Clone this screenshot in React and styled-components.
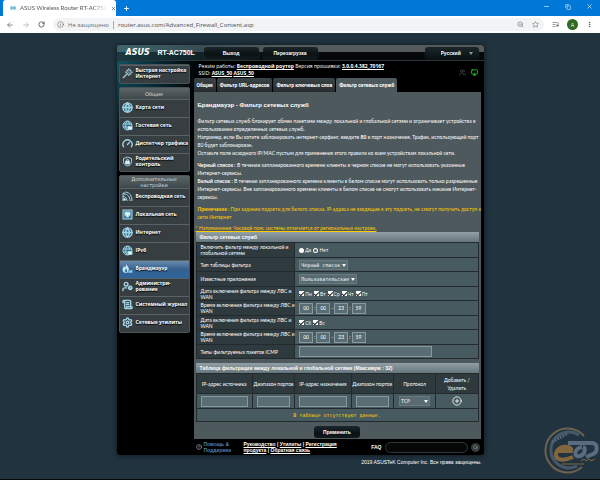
// core
import { useState } from 'react'
// style
import styled, { createGlobalStyle } from 'styled-components'
// icon
import {
  ArrowLeft, ArrowRight, RotateCw, Info, X, Plus, Minus, Copy, ZoomOut, Star, ListMusic,
  EllipsisVertical, Globe, Gauge, Shield, Rss, Network, Flame, Settings, ScrollText, Wand,
  UserCog, Users, Monitor, CirclePlus, Search, CircleHelp, Radio, Earth,
} from 'lucide-react'

const GlobalStyle = createGlobalStyle`
  *{ box-sizing: border-box; }
  body{
    margin: 0;
    background: #21333e;
    color: #fff;
    font: 5px/8px Lato, "Liberation Sans", Arial, sans-serif;
  }
  button, input, select{ font: inherit; color: inherit; margin: 0; }
  ul, p, h1, h2{ margin: 0; padding: 0; list-style: none; }
  a{ color: inherit; }
  svg{ display: block; flex-shrink: 0; }
`

const Page = styled.div`
  position: relative;
  display: flex;
  flex-direction: column;
  min-height: 100vh;
  border-bottom: 1px solid #05080a;
`

/* browser */
const TabStrip = styled.div`
  display: flex;
  align-items: flex-end;
  height: 16px;
  padding-left: 3px;
  background: #0078d7;
`
const BrowserTab = styled.div`
  display: flex;
  align-items: center;
  gap: 4px;
  width: 113px;
  height: 16px;
  padding: 0 5px 0 7px;
  border-radius: 3px 3px 0 0;
  background: #fff;
  color: #55595d;
  font: 6px/8px Lato, sans-serif;
  white-space: nowrap;
  span{
    flex: 1;
    mask-image: linear-gradient(90deg, #000 85%, transparent);
  }
`
const PlainButton = styled.button`
  display: flex;
  align-items: center;
  justify-content: center;
  padding: 0;
  border: 0;
  background: none;
  cursor: pointer;
`
const NewTab = styled(PlainButton)`
  width: 20px;
  height: 16px;
`
const AddButton = styled(PlainButton)`
  width: 100%;
`
const WindowButtons = styled.div`
  display: flex;
  gap: 15px;
  height: 13px;
  margin-left: auto;
  padding-right: 7px;
  align-self: flex-start;
`
const Toolbar = styled.div`
  display: flex;
  align-items: center;
  gap: 8px;
  height: 17px;
  padding: 0 7px 0 6px;
  background: #fff;
  color: #55595d;
`
const Address = styled.label`
  display: flex;
  flex: 1;
  align-items: center;
  gap: 4px;
  height: 13px;
  padding: 0 5px 0 4px;
  border-radius: 7px;
  background: #f1f3f4;
  color: #6b6f73;
  font: 6px/10px "Open Sans", sans-serif;
  white-space: nowrap;
  input{
    flex: 1;
    min-width: 0;
    height: 8px;
    padding: 0 0 0 4px;
    border: 0;
    border-left: 1px solid #a9adb0;
    background: none;
    color: #4a4e52;
    outline: none;
  }
`
const Avatar = styled(PlainButton)`
  width: 11px;
  height: 11px;
  border-radius: 50%;
  background: #2f6b22;
  color: #fff;
`

/* router */
const Router = styled.div`
  display: flex;
  flex-direction: column;
  width: calc(100% - 24px);
  max-width: 367px;
  margin: 12px auto 0;
  border-radius: 3px;
  background: radial-gradient(ellipse 84px 90px at 0 20px, #0f5260, #062530 55%, transparent), #000;
  box-shadow: 0 0 5px #0b141a;
`
const Header = styled.header`
  display: flex;
  align-items: center;
  gap: 4px;
  height: 16px;
  padding: 0 5px 0 9px;
  border-radius: 3px 3px 0 0;
  border-bottom: 1px solid #2c3539;
  background:
    linear-gradient(90deg, #2c6d7980, #19404a80 22%, transparent 45%),
    linear-gradient(#555a5c 0 7px, #050708 7px);
`
const Logo = styled.span`
  width: 28px;
  font: italic bold 8px/10px "DejaVu Sans", sans-serif;
`
const Model = styled.h1`
  width: 42px;
  font: bold 7px/10px "Liberation Sans", Arial, sans-serif;
  white-space: nowrap;
`
const DarkButton = styled.button`
  width: ${({ $width }) => $width}px;
  height: 12px;
  padding: 0;
  border: 0;
  border-radius: 3px;
  background: linear-gradient(#1c272b, #0a1114 60%, #101a1d);
  box-shadow: 0 0 1px #59666b;
  font: bold 5px/8px "Liberation Sans", Arial, sans-serif;
  cursor: pointer;
`
const Language = styled.div`
  position: relative;
  display: flex;
  align-items: center;
  margin-left: auto;
  select{
    width: 54px;
    height: 12px;
    padding: 0 16px;
    border: 0;
    border-radius: 3px;
    appearance: none;
    background: linear-gradient(#1c272b, #0a1114);
    box-shadow: 0 0 1px #59666b;
    font: bold 5px/8px "Liberation Sans", Arial, sans-serif;
  }
`
const Arrow = styled.span`
  position: absolute;
  right: ${({ $right = 2 }) => $right}px;
  top: 50%;
  margin-top: -1px;
  border: 2px solid transparent;
  border-top: 3px solid ${({ $color = '#fff' }) => $color};
  border-bottom: 0;
  pointer-events: none;
`
const Body = styled.div`
  display: flex;
  gap: 4px;
  padding: 1px 3px 0 2px;
`

/* menu */
const Side = styled.nav`
  display: flex;
  flex-direction: column;
  flex-shrink: 0;
  gap: 3px;
  width: 71px;
  padding-top: 2px;
  font: bold 5px/6px "Open Sans", sans-serif;
`
const MenuGroup = styled.section`
  border: 1px solid #4a5357;
  border-radius: 2px;
  background: #363e41;
  h2{
    display: flex;
    align-items: center;
    justify-content: center;
    min-height: 11px;
    background: linear-gradient(#5b6467, #3e474a);
    color: #d8dddf;
    font: 5px/6px "DejaVu Sans", sans-serif;
    text-align: center;
    white-space: pre-line;
  }
`
const MenuItem = styled.a`
  display: flex;
  align-items: center;
  gap: 3px;
  height: 18px;
  padding: 0 0 3px 2px;
  border-top: 1px solid #596266;
  background: ${({ $on }) => $on ? 'linear-gradient(#6a89ad, #34618f 50%, #2f659d)' : 'none'};
  text-decoration: none;
  white-space: pre;
  text-shadow: 0 1px 1px #000;
  svg{ color: #a4d3e6; }
`

/* content */
const Main = styled.main`
  flex: 1;
  min-width: 0;
`
const Status = styled.div`
  display: flex;
  align-items: center;
  justify-content: space-between;
  height: 16px;
  padding: 0 3px 0 5px;
  font: 5px/7px "Open Sans", sans-serif;
  white-space: nowrap;
  a{ font-weight: bold; }
  div{
    display: flex;
    gap: 5px;
    padding-top: 5px;
  }
`
const Tabs = styled.div`
  display: flex;
  gap: 1px;
`
const Tab = styled.button`
  height: 14px;
  padding: 0 3px;
  border: 0;
  border-radius: 2px 2px 0 0;
  background: ${({ $on }) => $on ? '#4d595d' : 'linear-gradient(#3a4347, #252d30)'};
  font: bold 5px/8px Roboto, sans-serif;
  white-space: nowrap;
  cursor: pointer;
`
const Panel = styled.div`
  display: flex;
  flex-direction: column;
  padding: 8px 2px 1px;
  background: #4d595d;
`
const Title = styled.h2`
  padding: 0 2px;
  font: bold 6px/10px "Liberation Sans", Arial, sans-serif;
`
const Text = styled.p`
  margin-top: ${({ $gap = 4 }) => $gap}px;
  padding-left: 2px;
  color: ${({ $warn }) => $warn ? '#fc0' : '#fff'};
  white-space: nowrap;
`
const Remark = styled.a`
  align-self: flex-start;
  margin-top: 3px;
  color: #fc0;
  white-space: nowrap;
`
const Table = styled.table`
  width: 100%;
  margin-top: ${({ $gap = 0 }) => $gap}px;
  border: 1px solid #222a2d;
  border-collapse: collapse;
  table-layout: fixed;
  line-height: 6px;
  caption{
    height: 10px;
    padding-left: 4px;
    background: linear-gradient(#92a0a5, #66757c);
    font: bold 5px/10px "Liberation Sans", Arial, sans-serif;
    text-align: left;
    white-space: nowrap;
  }
  th, td{
    padding: 0 4px;
    border: 1px solid #222a2d;
  }
  th{
    background: #2f3a3e;
    font-weight: normal;
  }
  td{ background: #475a5f; }
`
const FormTable = styled(Table)`
  tr{ height: 14px; }
  tr:nth-child(odd){ height: 15px; }
  th{
    width: 35%;
    text-align: left;
    white-space: pre;
  }
`
const FilterTable = styled(Table)`
  text-align: center;
  thead tr{ height: 20px; }
  tbody tr{ height: 15px; }
  tfoot tr{ height: 13px; }
  th{ padding: 0; line-height: 8px; white-space: pre; }
  tfoot td{
    color: #fc0;
    font-family: "DejaVu Sans Mono", monospace;
  }
`
const Line = styled.div`
  display: flex;
  align-items: center;
  gap: ${({ $gap = 2 }) => $gap}px;
`
const Field = styled.input`
  display: block;
  width: ${({ $width = '100%' }) => $width};
  height: 11px;
  padding: 0 3px;
  border: 1px solid #8a999e;
  background: #596d74;
  outline: none;
`
const SelectBox = styled.span`
  position: relative;
  display: inline-block;
  vertical-align: middle;
  select{
    display: block;
    width: ${({ $width }) => $width}px;
    height: 10px;
    padding: 0 1px;
    border: 1px solid #6b7b80;
    appearance: none;
    background: #576b71;
    font: 5px/8px "DejaVu Sans Mono", monospace;
  }
`
const Check = styled.label`
  display: flex;
  align-items: center;
  gap: 1px;
  font-family: "Open Sans", sans-serif;
  input{
    display: grid;
    place-content: center;
    width: 5px;
    height: 5px;
    border-radius: ${({ $round }) => $round ? '50%' : '0'};
    background: #fff;
    appearance: none;
  }
  input[type="checkbox"]:checked::before{
    content: '';
    width: 2px;
    height: 4px;
    border: solid #222;
    border-width: 0 1px 1px 0;
    transform: rotate(45deg);
  }
  input[type="radio"]:not(:checked)::before{
    content: '';
    width: 3px;
    height: 3px;
    border-radius: 50%;
    background: #5c686c;
  }
`
const Apply = styled(DarkButton)`
  align-self: center;
  margin-top: 4px;
`
const Footer = styled.footer`
  display: flex;
  align-items: center;
  height: 16px;
  margin-left: 77px;
  padding: 0 4px 0 2px;
  font: bold 5px/6px "Liberation Sans", Arial, sans-serif;
  white-space: nowrap;
`
const Support = styled.span`
  display: flex;
  align-items: center;
  gap: 2px;
  width: 48px;
  color: #4f7fb5;
`
const Faq = styled.label`
  display: flex;
  align-items: center;
  gap: 3px;
  margin-left: auto;
  line-height: 8px;
  input{
    width: 83px;
    height: 11px;
    border: 1px solid #33393b;
    border-radius: 6px;
    background: #060808;
  }
`
const SearchButton = styled(PlainButton)`
  width: 9px;
  height: 9px;
  margin-left: 3px;
  border-radius: 50%;
  background: #33393b;
`
const Copyright = styled.p`
  width: 100%;
  max-width: 367px;
  margin: 3px auto 0;
  padding: 0 2px;
  font: 5px/8px "Liberation Sans", Arial, sans-serif;
  text-align: right;
`
const Watermark = styled.svg`
  position: absolute;
  right: 0;
  bottom: 5px;
  opacity: 0.85;
`

const mainMenu = [
  { name: 'Карта сети', Icon: Globe },
  { name: 'Гостевая сеть', Icon: Earth },
  { name: 'Диспетчер трафика', Icon: Gauge },
  { name: 'Родительский\nконтроль', Icon: Shield },
]
const extraMenu = [
  { name: 'Беспроводная сеть', Icon: Rss },
  { name: 'Локальная сеть', Icon: Network },
  { name: 'Интернет', Icon: Globe },
  { name: 'IPv6', Icon: Earth },
  { name: 'Брандмауэр', Icon: Flame },
  { name: 'Администри-\nрование', Icon: UserCog },
  { name: 'Системный журнал', Icon: ScrollText },
  { name: 'Сетевые утилиты', Icon: Settings },
]
const tabs = ['Общие', 'Фильтр URL-адресов', 'Фильтр ключевых слов', 'Фильтр сетевых служб']

function Menu({ title, items, page, setPage }) {
  return (
    <MenuGroup>
      <h2>{title}</h2>
      {items.map(({ name, Icon }) => (
        <MenuItem key={name} href="#" $on={page == name} onClick={() => setPage(name)}>
          <MenuIcon Icon={Icon} />
          <span>{name}</span>
        </MenuItem>
      ))}
    </MenuGroup>
  )
}

function MenuIcon({ Icon }) {
  if (Icon == Network) return (
    <svg width="11" height="11" viewBox="0 0 22 22" fill="none" stroke="currentColor" strokeWidth="2">
      <rect x="2" y="2" width="18" height="18" fill="#3e7b94" />
      <path d="M6 6h10v7h-3v3H9v-3H6z" fill="#e7f4fa" />
    </svg>
  )
  if (Icon == Rss) return (
    <svg width="11" height="11" viewBox="0 0 22 22" fill="none" stroke="currentColor" strokeWidth="2">
      <path d="M2 20V4h5M2 11c5 0 8 3 8 9M3 6c9 0 13 6 13 14M7 2c8 1 13 7 13 18" />
      <circle cx="5" cy="17" r="2" fill="#e7f4fa" />
    </svg>
  )
  if (Icon == Earth) return (
    <svg width="11" height="11" viewBox="0 0 22 22" fill="none" stroke="currentColor" strokeWidth="2">
      <circle cx="11" cy="11" r="9" fill="#2f6b84" />
      <path d="M2 8h18M2 14h9M11 2c-5 5-5 13 0 18M11 2c3 3 4 5 4 8" />
      <path d="M12 13h8v6h-8z" fill="#e7f4fa" />
    </svg>
  )
  if (Icon == Shield) return (
    <svg width="11" height="11" viewBox="0 0 22 22" fill="none" stroke="currentColor" strokeWidth="2">
      <path d="M11 2l8 3v6c0 5-4 8-8 9-4-1-8-4-8-9V5z" />
      <path d="M7 10h8v6H7z" fill="#e7f4fa" />
      <path d="M9 10V8c0-2 4-2 4 0v2" />
    </svg>
  )
  if (Icon == Flame) return (
    <svg width="11" height="11" viewBox="0 0 22 22">
      <path d="M8 1c1 5 6 6 6 12 0 4-2 7-6 7s-7-3-7-7c0-3 2-4 3-7l2 3c2-2 2-5 2-8z" fill="#c5e6f3" />
      <path d="M8 11c3 3 3 7 0 8-3-1-3-5 0-8z" fill="#34759a" />
      <path d="M13 14h8v6h-9zM16 14v6" fill="#a4d3e6" stroke="#34759a" />
    </svg>
  )
  return <Icon size={11} strokeWidth={3} fill={Icon == Globe ? '#34728c' : 'none'} />
}

function Select({ label, width, options }) {
  return (
    <SelectBox $width={width}>
      <select aria-label={label}>
        {options.map((option) => <option key={option}>{option}</option>)}
      </select>
      <Arrow />
    </SelectBox>
  )
}

function Days({ days }) {
  return (
    <Line>
      {days.map((day) => (
        <Check key={day}><input type="checkbox" defaultChecked />{day}</Check>
      ))}
    </Line>
  )
}

function Time() {
  return (
    <Line $gap={1}>
      <Field $width="14px" defaultValue="00" aria-label="С, часы" />:
      <Field $width="14px" defaultValue="00" aria-label="С, минуты" />-
      <Field $width="14px" defaultValue="23" aria-label="До, часы" />:
      <Field $width="14px" defaultValue="59" aria-label="До, минуты" />
    </Line>
  )
}

function Browser() {
  return (
    <>
      <TabStrip>
        <BrowserTab>
          <Radio size={6} color="#2c9fc0" strokeWidth={3} />
          <span>ASUS Wireless Router RT-AC750</span>
          <X size={5} strokeWidth={3} />
        </BrowserTab>
        <NewTab aria-label="Новая вкладка"><Plus size={7} color="#fff" strokeWidth={3} /></NewTab>
        <WindowButtons>
          <PlainButton aria-label="Свернуть"><Minus size={7} color="#fff" /></PlainButton>
          <PlainButton aria-label="Развернуть"><Copy size={6} color="#fff" /></PlainButton>
          <PlainButton aria-label="Закрыть"><X size={7} color="#fff" /></PlainButton>
        </WindowButtons>
      </TabStrip>
      <Toolbar>
        <PlainButton aria-label="Назад"><ArrowLeft size={8} /></PlainButton>
        <PlainButton aria-label="Вперед"><ArrowRight size={8} color="#a8abad" /></PlainButton>
        <PlainButton aria-label="Обновить"><RotateCw size={7} strokeWidth={3} /></PlainButton>
        <Address>
          <Info size={7} />
          Не защищено
          <input defaultValue="router.asus.com/Advanced_Firewall_Content.asp" />
          <ZoomOut size={7} />
          <span />
          <Star size={7} />
        </Address>
        <ListMusic size={7} />
        <Avatar>A</Avatar>
        <EllipsisVertical size={7} strokeWidth={3} />
      </Toolbar>
    </>
  )
}

function App() {
  const [ page, setPage ] = useState('Брандмауэр')
  const [ tab, setTab ] = useState(tabs[3])

  return (
    <Page>
      <GlobalStyle />
      <Browser />
      <Router>
        <Header>
          <Logo>ASUS</Logo>
          <Model>RT-AC750L</Model>
          <DarkButton $width={55}>Выход</DarkButton>
          <DarkButton $width={55}>Перезагрузка</DarkButton>
          <Language>
            <select aria-label="Язык"><option>Русский</option></select>
            <Arrow $right={6} $color="#8b999f" />
          </Language>
        </Header>
        <Body>
          <Side>
            <MenuGroup>
              <MenuItem href="#" onClick={() => setPage('')}>
                <Wand size={11} strokeWidth={3} />
                <span>{'Быстрая настройка\nИнтернет'}</span>
              </MenuItem>
            </MenuGroup>
            <Menu title="Общие" items={mainMenu} page={page} setPage={setPage} />
            <Menu title={'Дополнительные\nнастройки'} items={extraMenu} page={page} setPage={setPage} />
          </Side>
          <Main>
            <Status>
              <p>
                Режим работы: <a href="#">Беспроводной роутер</a> Версия прошивки: <a href="#">3.0.0.4.382_70167</a><br />
                SSID: <a href="#">ASUS_50</a> <a href="#">ASUS_50</a>
              </p>
              <div>
                <Users size={7} color="#555c5f" />
                <Monitor size={7} color="#1fc52b" strokeWidth={3} />
              </div>
            </Status>
            <Tabs>
              {tabs.map((name) => (
                <Tab key={name} $on={tab == name} onClick={() => setTab(name)}>{name}</Tab>
              ))}
            </Tabs>
            <Panel>
              <Title>Брандмауэр - Фильтр сетевых служб</Title>
              <Text $gap={7}>
                Фильтр сетевых служб блокирует обмен пакетами между локальной и глобальной сетями и ограничивает устройства в<br />
                использовании определенных сетевых служб.<br />
                Например, если Вы хотите заблокировать интернет-серфинг, введите <b>80</b> в порт назначения. Трафик, использующий порт<br />
                80 будет заблокирован.<br />
                Оставьте поле исходного IP/MAC пустым для применения этого правила ко всем устройствам локальной сети.
              </Text>
              <Text>
                <b>Черный список :</b> В течении запланированного времени клиенты в черном списке не могут использовать указанные<br />
                Интернет-сервисы.<br />
                <b>Белый список :</b> В течении запланированного времени клиенты в белом списке могут использовать только разрешенные<br />
                Интернет-сервисы. Вне запланированного времени клиенты в белом списке не смогут использовать никакие Интернет-<br />
                сервисы.
              </Text>
              <Text $warn>
                <b>Примечание :</b> При задании подсети для белого списка, IP-адреса не входящие в эту подсеть, не смогут получить доступ к<br />
                сети Интернет
              </Text>
              <Remark href="#">* Напоминание: Часовой пояс системы отличается от региональных настроек.</Remark>
              <FormTable>
                <caption>Фильтр сетевых служб</caption>
                <tbody>
                  <tr>
                    <th>{'Включить фильтр между локальной и\nглобальной сетями'}</th>
                    <td>
                      <Line>
                        <Check $round><input type="radio" name="enable" defaultChecked />Да</Check>
                        <Check $round><input type="radio" name="enable" />Нет</Check>
                      </Line>
                    </td>
                  </tr>
                  <tr>
                    <th>Тип таблицы фильтра</th>
                    <td><Select label="Тип таблицы фильтра" width={49} options={['Черный список', 'Белый список']} /></td>
                  </tr>
                  <tr>
                    <th>Известные приложения</th>
                    <td><Select label="Известные приложения" width={58} options={['Пользовательские']} /></td>
                  </tr>
                  <tr>
                    <th>{'Дата включения фильтра между ЛВС и\nWAN'}</th>
                    <td><Days days={['Пн', 'Вт', 'Ср', 'Чт', 'Пт']} /></td>
                  </tr>
                  <tr>
                    <th>{'Время включения фильтра между ЛВС и\nWAN'}</th>
                    <td><Time /></td>
                  </tr>
                  <tr>
                    <th>{'Дата включения фильтра между ЛВС и\nWAN'}</th>
                    <td><Days days={['Сб', 'Вс']} /></td>
                  </tr>
                  <tr>
                    <th>{'Время включения фильтра между ЛВС и\nWAN'}</th>
                    <td><Time /></td>
                  </tr>
                  <tr>
                    <th><label htmlFor="icmp">Типы фильтруемых пакетов ICMP</label></th>
                    <td><Field id="icmp" $width="76%" /></td>
                  </tr>
                </tbody>
              </FormTable>
              <FilterTable $gap={4}>
                <caption>Таблица фильтрации между локальной и глобальной сетями (Максимум : 32)</caption>
                <colgroup>
                  <col width="20%" />
                  <col width="15%" />
                  <col width="20%" />
                  <col width="15%" />
                  <col width="15%" />
                  <col width="15%" />
                </colgroup>
                <thead>
                  <tr>
                    <th>IP-адрес источника</th>
                    <th>Диапазон портов</th>
                    <th>IP-адрес назначения</th>
                    <th>Диапазон портов</th>
                    <th>Протокол</th>
                    <th>{'Добавить /\nУдалить'}</th>
                  </tr>
                </thead>
                <tbody>
                  <tr>
                    <td><Field aria-label="IP-адрес источника" /></td>
                    <td><Field aria-label="Диапазон портов источника" /></td>
                    <td><Field aria-label="IP-адрес назначения" /></td>
                    <td><Field aria-label="Диапазон портов назначения" /></td>
                    <td><Select label="Протокол" width={31} options={['TCP', 'UDP']} /></td>
                    <td><AddButton aria-label="Добавить"><CirclePlus size={10} /></AddButton></td>
                  </tr>
                </tbody>
                <tfoot>
                  <tr><td colSpan="6">В таблице отсутствуют данные.</td></tr>
                </tfoot>
              </FilterTable>
              <Apply $width={46}>Применить</Apply>
            </Panel>
          </Main>
        </Body>
        <Footer>
          <Support><CircleHelp size={6} color="#b9c6cc" /><span>Помощь &<br />Поддержка</span></Support>
          <p>
            <a href="#">Руководство</a> | <a href="#">Утилиты</a> | <a href="#">Регистрация<br />продукта</a> | <a href="#">Обратная связь</a>
          </p>
          <Faq>FAQ<input type="text" /></Faq>
          <SearchButton aria-label="Поиск"><Search size={5} color="#aab3b6" /></SearchButton>
        </Footer>
      </Router>
      <Copyright>2019 ASUSTeK Computer Inc. Все права защищены.</Copyright>
      <Watermark width="60" height="48" viewBox="0 0 60 48" fill="none" aria-hidden="true">
        <path d="M44 10A22 22 0 1 0 42 41" stroke="#7c6a52" strokeWidth="2" />
        <path d="M39 9A18 18 0 1 0 37 40" stroke="#4d6070" strokeWidth="3" />
        <path d="M12 16l16-9" stroke="#5c7084" strokeWidth="3" strokeDasharray="2 1" />
        <path d="M17 25h14c2-6-13-6-15 2-1 8 8 8 17 4" stroke="#94703f" strokeWidth="4" />
        <path d="M28 17h24c6 0 6 9 1 11l-7 3M42 21c-8 1-9 11-2 9 5-1 6-8 3-9" stroke="#65788c" strokeWidth="4" />
        <path d="M41 35l3-2 2 2 3-2 2 2 4-2M22 38h22" stroke="#94703f" strokeWidth="1" />
      </Watermark>
    </Page>
  )
}

export default App
